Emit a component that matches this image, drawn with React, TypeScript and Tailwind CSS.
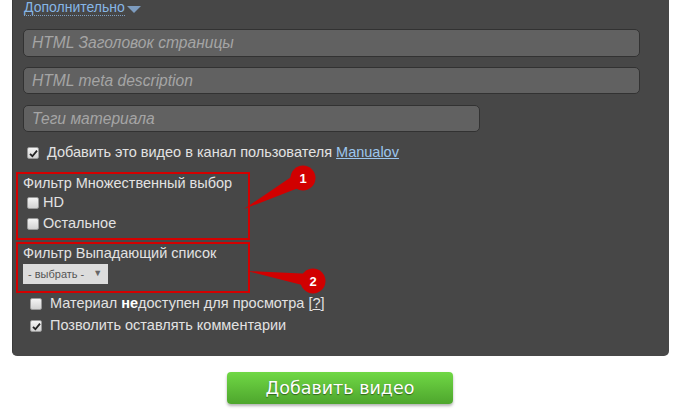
import type { ReactNode } from 'react'

function Check({ checked }: { checked?: boolean }) {
  return (
    <span className="relative inline-flex w-[12px] h-[12px] shrink-0 items-center justify-center rounded-[2px] border border-[#9a9a9a] bg-gradient-to-b from-[#f4f4f4] to-[#d2d2d2]">
      {checked && (
        <svg width="9" height="9" viewBox="0 0 9 9">
          <path d="M1 4.8 L3.4 7.2 L8 1.6" fill="none" stroke="#222" strokeWidth="1.8" />
        </svg>
      )}
    </span>
  )
}

function Field({ placeholder, wide = true }: { placeholder: string; wide?: boolean }) {
  return (
    <div
      className={[
        'flex items-center rounded-[5px] border border-[#323232] bg-[#616161] px-[8px] text-[15.6px] italic text-[#a5a5a5]',
        wide ? 'w-[617px]' : 'w-[457px]',
      ].join(' ')}
    >
      {placeholder}
    </div>
  )
}

function Row({ checked, children }: { checked?: boolean; children: ReactNode }) {
  return (
    <div className="flex h-[20px] items-center pl-[14px]">
      <Check checked={checked} />
      <span className="ml-[8px]">{children}</span>
    </div>
  )
}

export default function App() {
  return (
    <div className="relative h-[410px] w-[684px] overflow-hidden bg-white text-[14.5px] text-[#e2e2e2] [font-family:'Liberation_Sans',Arial,sans-serif]">
      {/* Panel */}
      <div className="ml-[12px] w-[657px] rounded-b-[5px] border-l border-[#3a3a3a] bg-[#474747] pl-[3px] pb-[20px]">
        <div className="flex h-[16px] items-center pl-[8px] text-[14px]">
          <span className="border-b border-dotted border-[#7f9fc0] leading-[15px] text-[#86b6e6]">Дополнительно</span>
          <svg className="ml-[2px] mt-[2px]" width="14" height="7" viewBox="0 0 14 7">
            <polygon points="0,0 14,0 7,7" fill="#7d9cbf" />
          </svg>
        </div>

        <div className="mt-[13px] flex flex-col pl-[7px]">
          <div className="flex h-[28px]"><Field placeholder="HTML Заголовок страницы" /></div>
          <div className="mt-[10px] flex h-[27px]"><Field placeholder="HTML meta description" /></div>
          <div className="mt-[11px] flex h-[27px]"><Field placeholder="Теги материала" wide={false} /></div>
        </div>

        <div className="mt-[11px] flex h-[20px] items-center pl-[11px]">
          <Check checked />
          <span className="ml-[8px]">
            Добавить это видео в канал пользователя{' '}
            <span className="text-[#9cc6ee] underline">Manualov</span>
          </span>
        </div>

        {/* Filter 1 */}
        <div className="mt-[9px] h-[68px] w-[234px] border-2 border-[#d40000] pl-[5px]">
          <div className="flex h-[19px] items-center">Фильтр Множественный выбор</div>
          <div className="flex h-[20px] items-center pl-[4px]">
            <Check />
            <span className="ml-[4px]">HD</span>
          </div>
          <div className="flex h-[21px] items-center pl-[4px]">
            <Check />
            <span className="ml-[4px]">Остальное</span>
          </div>
        </div>

        {/* Filter 2 */}
        <div className="mt-[2px] h-[51px] w-[234px] border-2 border-[#d40000] pl-[5px]">
          <div className="flex h-[20px] items-center">Фильтр Выпадающий список</div>
          <div className="flex h-[20px] w-[85px] items-center bg-[#dcdcdc] pl-[5px] text-[11px] text-[#555]">
            - выбрать -
            <span className="ml-[9px] text-[9px] text-[#666]">▼</span>
          </div>
        </div>

        <div className="mt-[1px]">
          <Row>
            Материал <b className="text-white">не</b>доступен для просмотра [<span className="underline">?</span>]
          </Row>
        </div>
        <div className="mt-[2px]">
          <Row checked>Позволить оставлять комментарии</Row>
        </div>
      </div>

      {/* Submit */}
      <div className="mt-[16px] flex pl-[227px]">
        <button
          type="button"
          className="h-[32px] w-[226px] rounded-[4px] bg-gradient-to-b from-[#70d845] to-[#4ea62d] text-[17.5px] text-white shadow-[0_2px_3px_rgba(0,0,0,0.3)] [font-family:'DejaVu_Sans',Verdana,sans-serif] [text-shadow:0_1px_1px_rgba(0,0,0,0.45)]"
        >
          Добавить видео
        </button>
      </div>

      {/* Callouts */}
      <svg className="absolute left-0 top-0" width="684" height="410">
        <polygon points="244,209 300,171 306,185" fill="#d10000" />
        <circle cx="303" cy="178" r="12.5" fill="#d10000" />
        <text x="303" y="183" textAnchor="middle" fontSize="13" fontWeight="bold" fill="#fff" fontFamily="Liberation Sans, Arial, sans-serif">1</text>
        <polygon points="247,271 312,274 314,288" fill="#d10000" />
        <circle cx="313" cy="281" r="12.5" fill="#d10000" />
        <text x="313" y="286" textAnchor="middle" fontSize="13" fontWeight="bold" fill="#fff" fontFamily="Liberation Sans, Arial, sans-serif">2</text>
      </svg>
    </div>
  )
}
